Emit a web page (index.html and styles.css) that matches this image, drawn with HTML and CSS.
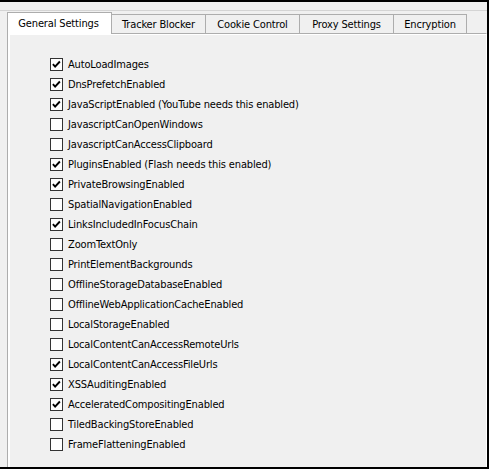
FILE: index.html
```html
<!DOCTYPE html>
<html>
<head>
<meta charset="utf-8">
<link rel="stylesheet" href="styles.css">
</head>
<body>
<div class="window">
  <div class="frame">
    <div class="tabs">
      <div class="tab active">General Settings</div>
      <div class="tab w95">Tracker Blocker</div>
      <div class="tab w95">Cookie Control</div>
      <div class="tab w95">Proxy Settings</div>
      <div class="tab w74">Encryption</div>
    </div>
    <div class="pane">
      <label class="row"><span class="box checked"><svg viewBox="0 0 11 11"><path d="M1.9 5.2 L4.1 7.6 L8.9 2.5"/></svg></span>AutoLoadImages</label>
      <label class="row"><span class="box checked"><svg viewBox="0 0 11 11"><path d="M1.9 5.2 L4.1 7.6 L8.9 2.5"/></svg></span>DnsPrefetchEnabled</label>
      <label class="row"><span class="box checked"><svg viewBox="0 0 11 11"><path d="M1.9 5.2 L4.1 7.6 L8.9 2.5"/></svg></span>JavaScriptEnabled (YouTube needs this enabled)</label>
      <label class="row"><span class="box"></span>JavascriptCanOpenWindows</label>
      <label class="row"><span class="box"></span>JavascriptCanAccessClipboard</label>
      <label class="row"><span class="box checked"><svg viewBox="0 0 11 11"><path d="M1.9 5.2 L4.1 7.6 L8.9 2.5"/></svg></span>PluginsEnabled (Flash needs this enabled)</label>
      <label class="row"><span class="box checked"><svg viewBox="0 0 11 11"><path d="M1.9 5.2 L4.1 7.6 L8.9 2.5"/></svg></span>PrivateBrowsingEnabled</label>
      <label class="row"><span class="box"></span>SpatialNavigationEnabled</label>
      <label class="row"><span class="box checked"><svg viewBox="0 0 11 11"><path d="M1.9 5.2 L4.1 7.6 L8.9 2.5"/></svg></span>LinksIncludedInFocusChain</label>
      <label class="row"><span class="box"></span>ZoomTextOnly</label>
      <label class="row"><span class="box"></span>PrintElementBackgrounds</label>
      <label class="row"><span class="box"></span>OfflineStorageDatabaseEnabled</label>
      <label class="row"><span class="box"></span>OfflineWebApplicationCacheEnabled</label>
      <label class="row"><span class="box"></span>LocalStorageEnabled</label>
      <label class="row"><span class="box"></span>LocalContentCanAccessRemoteUrls</label>
      <label class="row"><span class="box checked"><svg viewBox="0 0 11 11"><path d="M1.9 5.2 L4.1 7.6 L8.9 2.5"/></svg></span>LocalContentCanAccessFileUrls</label>
      <label class="row"><span class="box checked"><svg viewBox="0 0 11 11"><path d="M1.9 5.2 L4.1 7.6 L8.9 2.5"/></svg></span>XSSAuditingEnabled</label>
      <label class="row"><span class="box checked"><svg viewBox="0 0 11 11"><path d="M1.9 5.2 L4.1 7.6 L8.9 2.5"/></svg></span>AcceleratedCompositingEnabled</label>
      <label class="row"><span class="box"></span>TiledBackingStoreEnabled</label>
      <label class="row"><span class="box"></span>FrameFlatteningEnabled</label>
    </div>
  </div>
</div>
</body>
</html>
```
FILE: styles.css
```css
html, body {
  margin: 0;
  padding: 0;
  background: #f0f0f0;
}
.window {
  width: 489px;
  height: 469px;
  box-sizing: border-box;
  border-top: 2px solid #000;
  border-right: 2px solid #000;
  border-bottom: 2px solid #000;
  background: #f0f0f0;
  overflow: hidden;
  font-family: "DejaVu Sans Condensed", "Liberation Sans", sans-serif;
  font-size: 11px;
  letter-spacing: -0.15px;
  color: #000;
}
.frame {
  margin-top: 8px;
  border-top: 1px solid #d4d4d4;
  height: 460px;
  display: flex;
  flex-direction: column;
}
.tabs {
  display: flex;
  align-items: flex-end;
  padding-left: 7px;
  height: 22px;
  flex: none;
}
.tab {
  box-sizing: border-box;
  height: 19px;
  border: 1px solid #adadad;
  border-bottom: none;
  background: #f0f0f0;
  display: flex;
  align-items: center;
  justify-content: center;
  padding-top: 1px;
  margin-left: -1px;
  white-space: nowrap;
}
.tab.active {
  width: 105px;
  height: 22px;
  margin-left: 0;
  margin-bottom: -1px;
  background: #fff;
  position: relative;
  z-index: 1;
  padding-top: 0;
  padding-right: 2px;
}
.w95 { width: 95px; }
.w74 { width: 74px; }
.pane {
  flex: 1;
  margin-left: 7px;
  border-top: 1px solid #adadad;
  border-left: 1px solid #adadad;
  border-right: 1px solid #fff;
  box-shadow: inset 2px 1px 0 #fff;
  padding: 20px 0 0 42px;
  display: flex;
  flex-direction: column;
}
.row {
  height: 20px;
  display: flex;
  align-items: center;
  gap: 5px;
  white-space: nowrap;
}
.box {
  box-sizing: border-box;
  width: 13px;
  height: 13px;
  border: 1px solid #333;
  background: #fff;
  flex: none;
  display: flex;
}
.box svg {
  width: 11px;
  height: 11px;
}
.box path {
  fill: none;
  stroke: #000;
  stroke-width: 1.9;
}
```
